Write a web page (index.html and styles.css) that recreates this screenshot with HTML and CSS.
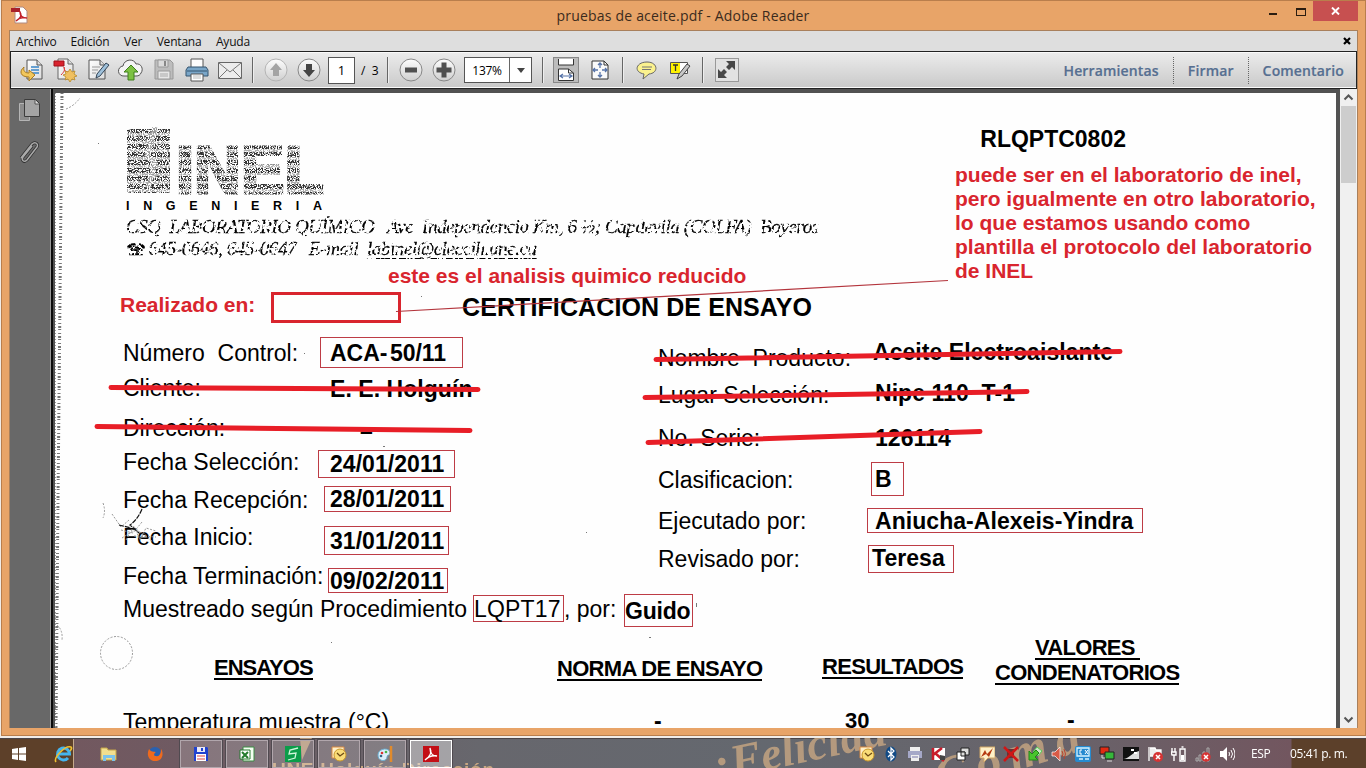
FILE: index.html
```html
<!DOCTYPE html>
<html lang="es">
<head>
<meta charset="utf-8">
<title>pruebas de aceite.pdf - Adobe Reader</title>
<link rel="stylesheet" href="styles.css">
</head>
<body>
<svg class="defs" width="0" height="0">
  <defs>
    <filter id="stipple" x="0" y="0" width="100%" height="100%">
      <feTurbulence type="fractalNoise" baseFrequency="0.85" numOctaves="2" seed="4"/>
      <feColorMatrix values="0 0 0 0 0  0 0 0 0 0  0 0 0 0 0  9 0 0 0 -3.9" result="n"/>
      <feComposite in="SourceGraphic" in2="n" operator="in"/>
    </filter>
    <filter id="worn" x="0" y="0" width="100%" height="100%">
      <feTurbulence type="fractalNoise" baseFrequency="0.3" numOctaves="2" seed="9"/>
      <feColorMatrix values="0 0 0 0 0  0 0 0 0 0  0 0 0 0 0  14 0 0 0 -5.9" result="n"/>
      <feComposite in="SourceGraphic" in2="n" operator="in"/>
    </filter>
    <linearGradient id="knob" x2="0" y2="1"><stop offset="0" stop-color="#fdfdfd"/><stop offset="1" stop-color="#cfcfcf"/></linearGradient>
    <linearGradient id="sheet" x2="1" y2="1"><stop offset="0" stop-color="#fff"/><stop offset="1" stop-color="#dcdcdc"/></linearGradient>
    <pattern id="bands" width="200" height="8" patternUnits="userSpaceOnUse"><rect width="200" height="5" fill="#333"/><rect y="5" width="200" height="3" fill="#aaa"/></pattern>
  </defs>
</svg>

<div class="window">
  <header class="titlebar">
    <svg class="app-icon" width="18" height="18"><path d="M4 1h8l4 4v12H4z" fill="#fff" stroke="#b08a80"/><path d="M0 2h9v4H0z" fill="#a8202a"/><path d="M5 15c5-3 6-6 4-9 0 5 3 6 7 6-4-1-8 0-11 3" fill="none" stroke="#c0202a" stroke-width="1.4"/></svg>
    <h1 class="caption">pruebas de aceite.pdf - Adobe Reader</h1>
    <div class="winbtns">
      <svg width="44" height="21"><path d="M0 13h8" stroke="#2b1d10" stroke-width="2"/><rect x="27.500" y="7.500" width="9" height="7" fill="none" stroke="#2b1d10"/><path d="M27 8h10" stroke="#2b1d10" stroke-width="2"/></svg>
      <span class="close"><svg width="9" height="8"><path d="M1 .5l7 7M8 .5l-7 7" stroke="#fff" stroke-width="1.900"/></svg></span>
    </div>
  </header>
  <div class="client">
    <nav class="menubar">
      <span>Archivo</span><span>Edición</span><span>Ver</span><span>Ventana</span><span>Ayuda</span>
      <svg class="menuclose" width="8" height="8"><path d="M1 1l6 6M7 1L1 7" stroke="#000" stroke-width="2.200"/></svg>
    </nav>
    <div class="toolbar">
      <span class="tool"><svg width="24" height="24"><path d="M7 2h10l5 5v14H7z" fill="url(#sheet)" stroke="#555"/><path d="M17 2v5h5" fill="#ddd" stroke="#555"/><path d="M11 9h8M11 12h8M11 15h8" stroke="#3a86c8" stroke-width="1.500"/><path d="M4 9c-5 4-4 10 5 10v4l6-6-6-5v3c-4 0-6-2-5-6z" fill="#f2c75c" stroke="#a87a20"/></svg></span>
      <span class="tool"><svg width="24" height="24"><path d="M5 1h10l5 5v15H5z" fill="url(#sheet)" stroke="#666"/><path d="M15 1v5h5" fill="#ddd" stroke="#666"/><path d="M1 3h10v5H1z" fill="#d8232e" stroke="#a01018"/><path d="M8 17c4-4 4-6 3-8 0 4 2 5 4 5" fill="none" stroke="#d33"/><path d="M17 11l2 3 3-1-1 3 3 2-3 1 1 3-3-1-2 3-2-3-3 1 1-3-3-2 3-1-1-3 3 1z" fill="#f0c060" stroke="#b98a28" stroke-width=".8"/></svg></span>
      <span class="tool"><svg width="24" height="24"><path d="M3 2h11l5 5v14H3z" fill="url(#sheet)" stroke="#555"/><path d="M14 2v5h5" fill="#ddd" stroke="#555"/><path d="M6 9h8M6 12h6M6 15h4" stroke="#999"/><path d="M20 5l3 2-9 11-4 2 1-4z" fill="#9ec0da" stroke="#345"/></svg></span>
      <span class="tool"><svg width="26" height="24"><path d="M6 18a5 5 0 0 1-1-10c1-7 11-8 13-2 5-1 8 5 5 9-1 2-2 3-5 3z" fill="#f4f4f4" stroke="#555"/><path d="M13 7l7 7h-4v8h-6v-8H6z" fill="#7cc142" stroke="#3f7f1c"/></svg></span>
      <span class="tool"><svg width="24" height="24"><path d="M3 2h15l3 3v16H3z" fill="#bdbdbd" stroke="#999"/><path d="M6 2h10v7H6z" fill="#dcdcdc" stroke="#999"/><path d="M13 3v5" stroke="#888" stroke-width="2"/><path d="M6 13h12v8H6z" fill="#e6e6e6" stroke="#999"/><path d="M8 16h8M8 18h8" stroke="#aaa"/></svg></span>
      <span class="tool"><svg width="24" height="24"><path d="M6 1h12v9H6z" fill="#fdfdfd" stroke="#555"/><path d="M3 9h18l2 3v6H1v-6z" fill="#7aa6c8" stroke="#35546e"/><path d="M2 13h20" stroke="#35546e"/><path d="M6 16h12v7H6z" fill="#fff" stroke="#555"/><path d="M8 18h8M8 20h8" stroke="#bbb"/></svg></span>
      <span class="tool"><svg width="26" height="24"><path d="M1.500 4.500h23v16h-23z" fill="#ececec" stroke="#666"/><path d="M2 5l11 9L24 5M2 20l8-8M24 20l-8-8" fill="none" stroke="#777"/></svg></span>
      <i class="sep"></i>
      <span class="tool nav-up"><svg width="24" height="24"><circle cx="12" cy="12" r="11" fill="url(#knob)" stroke="#b4b4b4"/><path d="M12 5l6 7h-3v6H9v-6H6z" fill="#a4a4a4"/></svg></span>
      <span class="tool nav-down"><svg width="24" height="24"><circle cx="12" cy="12" r="11" fill="url(#knob)" stroke="#888"/><path d="M12 19l6-7h-3V6H9v6H6z" fill="#454545"/></svg></span>
      <span class="pagebox">1</span><span class="pagecount">/&nbsp; 3</span>
      <i class="sep sep-b"></i>
      <span class="tool"><svg width="24" height="24"><circle cx="12" cy="12" r="11" fill="url(#knob)" stroke="#888"/><path d="M6 12h12" stroke="#505050" stroke-width="5"/></svg></span>
      <span class="tool"><svg width="24" height="24"><circle cx="12" cy="12" r="11" fill="url(#knob)" stroke="#888"/><path d="M4.500 12h15M12 4.500v15" stroke="#505050" stroke-width="5"/></svg></span>
      <span class="zoombox"><b>137%</b><svg width="22" height="24"><path d="M7 10h8l-4 5z" fill="#444"/></svg></span>
      <i class="sep sep-c"></i>
      <span class="pressed"><svg width="24" height="24"><path d="M4.500 1v6h15V1" fill="#fff" stroke="#333"/><path d="M4.500 22.500V11h10l5 4v7.500z" fill="#fff" stroke="#333"/><path d="M14.500 11v4h5" fill="none" stroke="#333"/><path d="M7 18h10M9 16l-3 2 3 2M15 16l3 2-3 2" fill="none" stroke="#5673a8" stroke-width="1.200"/></svg></span>
      <span class="tool fit"><svg width="20" height="22"><path d="M2 2h12l4 4v14H2z" fill="#fafafa" stroke="#333"/><path d="M14 2v4h4" fill="none" stroke="#333"/><path d="M10 4v14M3 11h14M8 6l2-2 2 2M8 16l2 2 2-2M5 9l-2 2 2 2M15 9l2 2-2 2" fill="none" stroke="#5673a8" stroke-width="1.300"/><rect x="8" y="9" width="4" height="4" fill="#fafafa"/></svg></span>
      <i class="sep sep-d"></i>
      <span class="tool"><svg width="22" height="20"><path d="M11 2c11 0 12 11 2 12l-6 5 1-5C-3 12 0 2 11 2z" fill="#fbf28e" stroke="#666"/><path d="M6 7h10M6 9.500h9" stroke="#777"/></svg></span>
      <span class="tool"><svg width="22" height="20"><path d="M1.500 2.500h17v11h-17z" fill="#fff" stroke="#555"/><path d="M2 3h9v10H2z" fill="#fff200"/><path d="M4 5h5M6.500 5v6" stroke="#333" stroke-width="1.300"/><path d="M18 4l3 2-8 10-5 3 2-5z" fill="#c8c8c8" stroke="#444"/></svg></span>
      <i class="sep sep-e"></i>
      <span class="expand"><svg width="22" height="22"><path d="M19 2v9l-3-3-3 3-3-3 3-3-3-3zM2 19v-9l3 3 3-3 3 3-3 3 3 3z" fill="#484848"/></svg></span>
      <div class="panes"><span>Herramientas</span><span>Firmar</span><span>Comentario</span></div>
    </div>
    <div class="work">
      <aside class="rail">
        <svg width="24" height="26"><path d="M1.500 6.500h10v17h-10z" fill="#8c8c8c" stroke="#b5b5b5"/><path d="M6.500 2.500h11l4 4v13h-15z" fill="#a4a4a4" stroke="#3c3c3c"/><path d="M17 3v4h4" fill="#ddd" stroke="#555"/></svg>
        <svg width="24" height="26"><path d="M3 18L14 4c3-3 7 0 5 3L9 20c-3 3-6 0-4-3l9-11" fill="none" stroke="#2f2f2f" stroke-width="3"/><path d="M3 18L14 4c3-3 7 0 5 3L9 20c-3 3-6 0-4-3l9-11" fill="none" stroke="#aaa" stroke-width="1.500"/></svg>
      </aside>
      <main class="viewer">
        <article class="page">
          <div class="letterhead">
            <div class="issuer">
              <svg class="logo" width="200" height="84" viewBox="126 127 200 84">
                <g filter="url(#stipple)">
                  <rect x="127" y="129" width="43" height="64" fill="url(#bands)"/>
                  <path d="M155 127l-8 30 8 6-7 25" fill="none" stroke="#999" stroke-width="5"/>
                  <text x="176" y="193" font-size="66" textLength="148" lengthAdjust="spacingAndGlyphs" fill="url(#bands)" stroke="url(#bands)" stroke-width="3">INEL</text>
                </g>
                <text class="logo-sub" x="126" y="210" font-size="12.500" textLength="196">INGENIERIA</text>
              </svg>
              <p class="worn addr">CSQ&nbsp; LABORATORIO QUÍMICO&nbsp;&nbsp; Ave&nbsp; Independencia Km, 6 ½; Capdevila (COLFA)&nbsp; Boyeros</p>
              <p class="worn mail"><span class="phone">☎</span>645-0646, 645-0647&nbsp;&nbsp; E-mail&nbsp; <u>labinel@eleccih.une.cu</u></p>
            </div>
            <div class="code">RLQPTC0802</div>
          </div>
          <div class="headline">
            <span class="note realizado">Realizado en:</span><span class="blank"></span><h2>CERTIFICACION DE ENSAYO</h2>
          </div>
          <section class="form">
            <div class="labels left">
              <span>Número&nbsp; Control:</span><span>Cliente:</span><span>Dirección:</span><span>Fecha Selección:</span><span>Fecha Recepción:</span><span>Fecha Inicio:</span><span>Fecha Terminación:</span>
            </div>
            <div class="values v-left">
              <b class="box control">ACA- 50/11</b><b class="client-name">E. E. Holguín</b><b class="dash">–</b><b class="box sel">24/01/2011</b><b class="box rec">28/01/2011</b><b class="box ini">31/01/2011</b><b class="box ter">09/02/2011</b>
            </div>
            <div class="labels right">
              <span>Nombre&nbsp; Producto:</span><span>Lugar Selección:</span><span>No. Serie:</span><span>Clasificacion:</span><span>Ejecutado por:</span><span>Revisado por:</span>
            </div>
            <div class="values v-right">
              <b class="product">Aceite Electroaislante</b><b class="place">Nipe 110&nbsp; T-1</b><b class="serial">126114</b><b class="box cls">B</b><b class="box exec">Aniucha-Alexeis-Yindra</b><b class="box rev">Teresa</b>
            </div>
          </section>
          <div class="sample">
            <span class="sample-text">Muestreado según Procedimiento</span><span class="box proc">LQPT17</span><span class="by">, por:</span><b class="box guido">Guido</b>
          </div>
          <section class="results">
            <div class="c1"><b class="th">ENSAYOS</b><span class="test">Temperatura muestra (°C)</span></div>
            <div class="c2"><b class="th">NORMA DE ENSAYO</b><b class="td">-</b></div>
            <div class="c3"><b class="th">RESULTADOS</b><b class="td">30</b></div>
            <div class="c4"><b class="th">VALORES&nbsp;</b><b class="th">CONDENATORIOS</b><b class="td">-</b></div>
          </section>

          <svg class="marks" width="1281" height="635" viewBox="55 93 1281 635">
            <g fill="none" stroke="#777">
              <path d="M62 93L58 500 56 728" stroke-width="3" stroke-dasharray="1 2 2 1 1 3"/><path d="M55.500 93V728" stroke="#999" stroke-dasharray="1 2"/>
            </g>
            <g fill="none" stroke="#999" stroke-dasharray="2 1.500">
              <path d="M66 109q8-3 14-11M57 625q6 5 5 15"/>
              <path d="M103 503q3 8 0 15M112 514l9 13 8-7M121 530l12 3 9-11M122 538l14-9 17 13M126 540l8-14 6 14 6-12 10 3M134 536l22 1"/>
              <ellipse cx="116.500" cy="653" rx="16" ry="16.500"/>
            </g>
            <path d="M142 509q-4 10-12 16l9 8 7 2M119 525l12 3" fill="none" stroke="#111" stroke-width="1.200" stroke-dasharray="5 1"/>
            <g fill="#777"><path d="M98 143h1v1h-1zM304 353h1v1h-1zM586 532h1v1h-1zM649 637h2v1h-2zM696 603h1v4h-1zM421 296h1v1h-1zM331 642h1v1h-1zM383 446h2v1h-2z"/></g>
            <g stroke="#e81e27" stroke-width="5" stroke-linecap="round">
              <path d="M111 387.500L478 389.500M97 426.500L470 430.500M656 359.500L1120 351.500M645 397.500L1027 391.500M648 442.500L980 431.500"/>
            </g>
            <path d="M396 311.500L948 280.500" stroke="#b3343c" stroke-width="1.200"/>
          </svg>
          <p class="note reduced">este es el analisis quimico reducido</p>
          <p class="note remark">puede ser en el laboratorio de inel,<br>pero igualmente en otro laboratorio,<br>lo que estamos usando como<br>plantilla el protocolo del laboratorio<br>de INEL</p>
        </article>
        <div class="scroll"><svg width="17" height="17"><path d="M4.500 10.500l4-4 4 4" fill="none" stroke="#555" stroke-width="2"/></svg><i class="thumb"></i><svg class="down" width="17" height="17"><path d="M4.500 6.500l4 4 4-4" fill="none" stroke="#555" stroke-width="2"/></svg></div>
      </main>
    </div>
  </div>
</div>

<footer class="taskbar">
  <svg class="wallpaper" width="1366" height="30">
    <g fill="#c9a782" opacity=".8" font-style="italic" font-weight="bold" font-family="Liberation Serif, serif">
      <text x="716" y="43" font-size="46" textLength="176" transform="rotate(-12 716 43)">¡Felicida</text>
      <text x="940" y="56" font-size="50" textLength="150" transform="rotate(-17 940 56)">Coma</text>
      <path d="M300 0h12l-10 22z"/>
    </g>
    <text x="272" y="38" font-size="19" font-weight="bold" textLength="222" fill="#c9a782" font-family="Liberation Sans, sans-serif">UNE Holguín Dirección</text>
  </svg>
  <div class="launch">
    <span class="start"><svg width="14" height="14"><path d="M0 2l6-1v5.500H0zM7 1l7-1v6.500H7zM0 7.500h6V13l-6-1zM7 7.500h7V14l-7-1z" fill="#fff"/></svg></span>
    <span class="ie"><svg width="19" height="18"><path d="M14 13a6 6 0 1 1 1.500-4H5" fill="none" stroke="#45b5ee" stroke-width="3"/><path d="M2 17c-3-4 9-17 15-15 1 1 0 3-1 4" fill="none" stroke="#f0c030" stroke-width="1.600"/></svg></span>
  </div>
  <span class="pin"><svg width="18" height="16"><path d="M1 2h6l1 2h8v10H1z" fill="#f2df8e" stroke="#c4a548"/><path d="M3 15V9h12v6h-3v-3H6v3z" fill="#7cc3ea"/></svg></span>
  <span class="pin"><svg width="16" height="16"><circle cx="8" cy="7.500" r="6.500" fill="#2a61b0"/><path d="M2 3c-3 6 0 12 6 12 8 0 9-8 6-12 0 5-2 8-5 7-3 0-2-3 0-4-3-1-4 1-7-3z" fill="#ee6a1e"/></svg></span>
  <span class="task first"><svg width="16" height="16"><path d="M1 1h13l1 1v13H1z" fill="#2142cf"/><path d="M4 1h8v5H4z" fill="#e8e8f4"/><path d="M9 2v3" stroke="#2142cf" stroke-width="2"/><path d="M3 8h10v7H3z" fill="#fff"/><path d="M4 10h8M4 13h8" stroke="#d44"/></svg></span>
  <span class="task"><svg width="16" height="16"><path d="M4 1h11v14H4z" fill="#f4fff2" stroke="#3d8c45"/><path d="M1 4h10v9H1z" fill="#fff" stroke="#277a30"/><path d="M3 6l6 6M9 6l-6 6" stroke="#237c2d" stroke-width="2"/></svg></span>
  <span class="task"><svg width="16" height="16"><path d="M0 0h16v16H0z" fill="#0b9d4a"/><path d="M13 2L5 4l-1 4 7-1-1 5-7 2" fill="none" stroke="#cff5db" stroke-width="1.300"/></svg></span>
  <span class="task"><svg width="16" height="16"><path d="M1 1h12v11H1z" fill="#fff0c8" stroke="#d88a42"/><circle cx="9" cy="9" r="6" fill="#f9dc77" stroke="#c9972b"/><path d="M6 7l3 3 4-3" fill="none" stroke="#6c4914" stroke-width="1.300"/></svg></span>
  <span class="task"><svg width="16" height="16"><path d="M1 9c0-7 12-8 12-2 0 3-3 1-3 4 0 5-9 5-9-2z" fill="#dceefa" stroke="#6aaed0"/><circle cx="5" cy="7" r="1.300" fill="#d33"/><circle cx="9" cy="6" r="1.300" fill="#49b449"/><circle cx="4" cy="10" r="1.300" fill="#368"/><path d="M14 0v16" stroke="#e18b2c" stroke-width="2.500"/></svg></span>
  <span class="task active"><svg width="16" height="16"><path d="M0 0h16v16H0z" fill="#c30f16"/><path d="M2 14c6-4 7-8 5-12 0 6 3 8 7 8-5-1-9 1-12 4z" fill="none" stroke="#fff" stroke-width="1.300"/></svg></span>
  <div class="tray">
    <svg width="16" height="16"><path d="M1 1h12v11H1z" fill="#fff0c8" stroke="#d88a42"/><circle cx="9" cy="9" r="6" fill="#f9dc77" stroke="#c9972b"/><path d="M6 7l3 3 4-3" fill="none" stroke="#6c4914" stroke-width="1.300"/></svg>
    <svg width="16" height="16"><ellipse cx="8" cy="8" rx="5.500" ry="7.500" fill="#124b86"/><path d="M5 5l6 6-3 3V2l3 3-6 6" fill="none" stroke="#fff" stroke-width="1.200"/></svg>
    <svg width="16" height="16"><path d="M3 1h10v5H3z" fill="#eee"/><path d="M1 5h14v7H1z" fill="#a5a8c8"/><path d="M4 9h8v6H4z" fill="#eee"/><path d="M5 11h6" stroke="#77a"/></svg>
    <svg width="16" height="16"><path d="M1 2h13v12H1z" fill="#fff"/><path d="M2 2v12M2 9L11 2M4 7l9 8" stroke="#c91b2a" stroke-width="2.500"/><path d="M9 9l5 1v4H9z" fill="#444"/></svg>
    <svg width="16" height="16"><g fill="#ddd" stroke="#222"><path d="M6 2h8v7H6z"/><path d="M2 6h8v8H2z" fill="#fff"/><path d="M6 6h4v4H6z"/></g></svg>
    <svg width="16" height="16"><path d="M1 1h15v11H9l-4 4v-4H1z" fill="#fff1c8" stroke="#d1a766"/><path d="M2 11l4-7 2 4 6-6-4 9-3-3z" fill="#b53b10"/></svg>
    <svg width="16" height="16"><path d="M4 3h7v9H4z" fill="#633"/><path d="M1 1l14 14M15 1L1 15" stroke="#d01616" stroke-width="2.500"/></svg>
    <svg width="16" height="16"><path d="M10 1l5 4-4 5-5-4z" fill="#cfe8c8" stroke="#5c5"/><path d="M2 5v9h9L8 11l4-4-3-3-4 4z" fill="#49c52d" stroke="#238618"/></svg>
    <svg width="16" height="16"><path d="M1 6h3l5-5v14l-5-5H1z" fill="#d95b47" stroke="#fff" stroke-width=".7"/><path d="M11 5q2 3 0 6M13 3q3 5 0 10" fill="none" stroke="#b9432f"/></svg>
    <svg width="16" height="16"><rect width="16" height="16" rx="2" fill="#268bd0"/><path d="M2 2h12v8H2zM4 13h4M10 13h4" fill="none" stroke="#d5f3ff" stroke-width="1.300"/><path d="M7 4H5v4h2M10 4l3 4M13 4l-3 4" fill="none" stroke="#fff"/></svg>
    <svg width="16" height="16"><path d="M1 1h9v7H1z" fill="#e22a12" stroke="#222"/><path d="M6 6h9v7H6z" fill="#36b73a" stroke="#222"/><path d="M8 15h5M3 9v3h3" stroke="#ddd" fill="none"/></svg>
    <svg width="16" height="16"><path d="M0 1h16v14H0z" fill="#111"/><path d="M0 13c6 0 8-6 16-8v8z" fill="#ddd"/><path d="M8 4h3M11 7h3" stroke="#fff" stroke-width="2"/></svg>
    <svg width="16" height="16"><path d="M2 1v14M3 2h5l1 2h5v6H3" stroke="#fff" fill="#eee" stroke-width="1.300"/><circle cx="11" cy="11" r="5" fill="#d73434"/><path d="M9 9l4 4M13 9l-4 4" stroke="#fff" stroke-width="1.500"/></svg>
    <svg width="16" height="16"><path d="M9 3h5v12H9zM10.500 1h2M4 2v4M1 2v4M0 6h5v3H1zM3 9v6" fill="none" stroke="#fff" stroke-width="1.400"/><path d="M10 9h3v5h-3z" fill="#fff"/></svg>
    <svg width="16" height="16"><path d="M1 12h2v3H1zM4 9h2v6H4zM8 6h2v9H8zM12 2h2v13h-2z" fill="none" stroke="#aaa"/><circle cx="11" cy="11" r="4.700" fill="#d73434"/><path d="M9 9l4 4M13 9l-4 4" stroke="#fff" stroke-width="1.500"/></svg>
    <svg width="16" height="16"><path d="M1 5h3l4-4v14l-4-4H1z" fill="#fff"/><path d="M10 6q1 2 0 4M12 4q3 4 0 8M14 2q4 6 0 12" fill="none" stroke="#fff"/></svg>
  </div>
  <span class="lang">ESP</span>
  <span class="clock">05:41 p. m.</span>
</footer>
</body>
</html>
```
FILE: styles.css
```css
* { box-sizing: border-box; }
body { margin: 0; width: 1366px; height: 768px; overflow: hidden; display: flex; flex-direction: column; background: #f1ece8; font-family: "Open Sans", "Noto Sans", sans-serif; }
svg { display: block; flex: none; }
p, h1, h2 { margin: 0; }
.defs { position: absolute; }

/* window frame */
.window { height: 736px; margin-left: 1px; padding: 0 7px 7px 7px; border: 1px solid #b97e4c; background: #e8a468; display: flex; flex-direction: column; flex: none; }
.titlebar { height: 29px; display: flex; align-items: flex-start; justify-content: space-between; flex: none; }
.app-icon { margin: 5px 0 0 2px; }
.caption { font-size: 14px; font-weight: 400; line-height: 29px; letter-spacing: .2px; color: #3b2b1d; margin-left: 68px; }
.winbtns { display: flex; }
.close { width: 45px; height: 20px; background: #c75050; display: flex; align-items: center; justify-content: center; }
.client { flex: 1; min-height: 0; border: 1px solid #a9805c; border-bottom: 0; display: flex; flex-direction: column; }
.menubar { height: 20px; background: #dedede; display: flex; align-items: center; gap: 14px; padding: 0 6px; font-size: 12px; letter-spacing: -.2px; color: #111; flex: none; }
.menubar span:nth-child(n+3) { margin-left: .5px; }
.menuclose { margin-left: auto; }

/* toolbar */
.toolbar { height: 38px; border: 1px solid #222; background: linear-gradient(#ececec, #c9c9c9); box-shadow: inset 0 1px #fafafa, inset 0 -1px #fafafa; display: flex; align-items: center; padding-left: 4px; flex: none; font-size: 12px; }
.tool { width: 33px; display: flex; justify-content: center; flex: none; }
.sep { width: 2px; height: 26px; background: #666; border-right: 1px solid #eee; margin: 0 6px 0 6px; flex: none; }
.nav-up { width: 32px; }
.nav-down { width: 33px; }
.pagebox { width: 27px; height: 27px; border: 1px solid #555; background: #fff; text-align: center; line-height: 25px; margin-left: 3px; font-size: 13px; }
.pagecount { margin-left: 6px; width: 20px; white-space: nowrap; }
.sep-b { margin: 0 5px 0 6px; }
.zoombox { display: flex; width: 68px; height: 26px; border: 1px solid #555; background: #fff; align-items: center; margin-left: 4px; flex: none; }
.zoombox b { font-weight: 400; width: 45px; text-align: center; letter-spacing: -.3px; }
.zoombox svg { border-left: 1px solid #666; }
.sep-c { margin: 0 9px 0 10px; }
.pressed { width: 26px; height: 26px; background: #bcbcbc; border: 1px solid #888; }
.fit { width: 42px; }
.sep-d { margin: 0 6px 0 1px; }
.sep-e { margin: 0 11px 0 6px; }
.expand { width: 24px; height: 24px; border: 1px solid #999; background: #e2e2e2; }
.panes { margin-left: auto; display: flex; font-size: 14px; font-weight: 600; letter-spacing: .15px; color: #566f91; -webkit-text-stroke: .2px #566f91; line-height: 27px; margin-right: -2px; }
.panes span { padding: 0 14px; border-left: 1px dotted #666; }
.panes span:first-child { border: 0; }

/* work area */
.work { flex: 1; min-height: 0; display: flex; }
.rail { width: 41px; background: #686868; border-right: 1px solid #999; padding: 8px 0 0 8px; display: flex; flex-direction: column; gap: 17px; flex: none; }
.viewer { flex: 1; display: flex; justify-content: space-between; background: #525252; border-left: 2px solid #0b0b0b; }
.page { position: relative; width: 1281px; height: 635px; margin: 4px 0 0 2px; background: #fefefe; overflow: hidden; color: #000; font-family: "Liberation Sans", Arial, sans-serif; flex: none; }
.scroll { width: 17px; background: #f0f0f0; display: flex; flex-direction: column; }
.thumb { height: 77px; background: #cdcdcd; margin: 0 1px; }
.down { margin-top: auto; }

/* scanned sheet */
.letterhead { height: 199px; display: flex; justify-content: space-between; padding: 34px 210px 0 71px; white-space: nowrap; }
.logo { font-family: "Liberation Sans", Arial, sans-serif; font-weight: bold; }
.worn { font: italic 19px/22px "Liberation Serif", "Times New Roman", serif; filter: url(#worn); -webkit-text-stroke: .3px #000; }
.addr { margin-top: 5px; letter-spacing: -.4px; }
.mail { letter-spacing: -.42px; }
.phone { font: 16px/20px "DejaVu Sans", sans-serif; margin-right: 3px; }
.mail u { text-underline-offset: 3px; }
.code { font: bold 23px/24px "Liberation Sans", Arial, sans-serif; }
.headline { display: flex; height: 31px; white-space: nowrap; }
.note { color: #d9252e; font-weight: bold; font-size: 21px; line-height: 24px; }
.realizado { width: 151px; margin-left: 65px; padding-top: 1px; }
.blank { width: 130px; height: 31px; border: 3px solid #d9252e; }
.headline h2 { font-size: 25px; line-height: 30px; letter-spacing: .1px; margin-left: 61px; }
.form { display: grid; grid-template-columns: 195px 340px 209px 1fr; height: 257px; padding: 14px 0 0 68px; font-size: 23px; line-height: 24px; white-space: nowrap; }
.labels, .values { display: flex; flex-direction: column; align-items: flex-start; }
.values b { letter-spacing: .05px; }
.box { border: 1px solid #bd3c45; display: flex; align-items: center; flex: none; }
.left { padding-top: 4px; }
.left span { height: 39px; }
.left span:nth-child(1) { height: 35px; }
.left span:nth-child(2) { height: 40px; }
.left span:nth-child(3) { height: 34px; }
.left span:nth-child(4) { height: 38px; }
.left span:nth-child(5) { height: 37px; }
.right { padding-top: 9px; }
.right span:nth-child(1) { height: 37px; }
.right span:nth-child(2) { height: 43px; }
.right span:nth-child(3) { height: 42px; }
.right span:nth-child(4) { height: 41px; }
.right span:nth-child(5) { height: 38px; }
.values .control { width: 143px; height: 31px; margin-left: 2px; padding-left: 9px; letter-spacing: 0; word-spacing: -4px; }
.client-name { margin: 9px 0 0 12px; }
.dash { margin: 16px 0 0 42px; height: 24px; line-height: 28px; }
.sel { width: 137px; height: 28px; margin-top: 9px; padding-left: 11px; }
.rec { width: 127px; height: 26px; margin: 8px 0 0 6px; padding-left: 5px; }
.ini { width: 125px; height: 29px; margin: 14px 0 0 6px; padding-left: 5px; }
.ter { width: 120px; height: 25px; margin: 13px 0 0 10px; padding-left: 1px; }
.product { margin: 3px 0 0 6px; }
.place { margin: 17px 0 0 8px; }
.serial { margin: 21px 0 0 8px; }
.cls { width: 33px; height: 34px; margin: 12px 0 0 4px; padding-left: 3px; }
.exec { width: 276px; height: 25px; margin-top: 12px; padding-left: 7px; }
.rev { width: 86px; height: 28px; margin: 12px 0 0 1px; padding: 0 0 3px 3px; }
.sample { display: flex; height: 47px; padding: 14px 0 0 68px; font-size: 23px; line-height: 24px; white-space: nowrap; }
.sample-text { width: 350px; margin-top: 3px; }
.proc { width: 91px; height: 27px; margin-top: 1px; letter-spacing: .2px; }
.by { width: 60px; margin-top: 3px; }
.guido { width: 69px; height: 33px; letter-spacing: -.2px; }
.results { display: grid; grid-template-columns: 434px 265px 173px 1fr; padding: 10px 0 0 68px; font-size: 22px; line-height: 24px; white-space: nowrap; }
.results div { display: flex; flex-direction: column; align-items: flex-start; }
.th { border-bottom: 2px solid #000; line-height: 22px; height: 23px; letter-spacing: -.7px; }
.c1 { padding-top: 20px; }
.c1 .th { margin-left: 91px; letter-spacing: -1px; }
.test { font-size: 23px; margin-top: 30px; }
.c2 { padding-top: 21px; }
.c3 { padding-top: 19px; }
.td { font-size: 23px; margin: 28px 0 0 97px; }
.c3 .td { font-size: 22px; margin: 30px 0 0 23px; }
.c4 .th:first-child { margin-left: 40px; }
.c4 .th + .th { margin-top: 2px; }
.c4 .td { margin: 23px 0 0 72px; }
.marks { position: absolute; left: 0; top: 0; }
.reduced { position: absolute; left: 333px; top: 171px; white-space: nowrap; }
.remark { position: absolute; left: 900px; top: 70px; white-space: nowrap; }

/* taskbar */
.taskbar { position: relative; height: 30px; margin-top: 2px; display: flex; align-items: center; background: linear-gradient(90deg, #72585f 74px, #6f5a62 180px, #67676d 480px, #64686f 780px, #68636a 1060px, #72565f 1291px, #5c402a 1292px); border-top: 1px solid #4b4549; flex: none; }
.taskbar > * { position: relative; flex: none; }
.taskbar > .wallpaper { position: absolute; left: 0; top: -1px; overflow: hidden; }
.launch { width: 74px; height: 29px; background: #5d4029; border-right: 1px solid #c5a98c; display: flex; align-items: center; padding-left: 12px; }
.start { width: 42px; }
.pin { width: 46px; display: flex; justify-content: center; }
.pin:nth-of-type(1) { margin-left: 12px; }
.task { width: 42px; height: 28px; border: 1px solid #b1a6ac; background: rgba(255,255,255,.17); display: flex; align-items: center; justify-content: center; margin-right: 4px; box-shadow: 0 0 0 1px #504a50; }
.first { margin-left: 2px; }
.active { background: rgba(255,255,255,.4); border-color: #fff; }
.tray { display: flex; gap: 8px; margin-left: auto; margin-right: 16px; }
.lang { width: 39px; font-size: 12px; color: #fff; letter-spacing: -.4px; }
.clock { width: 76px; font-size: 12px; color: #fff; letter-spacing: -.4px; white-space: nowrap; }
```
